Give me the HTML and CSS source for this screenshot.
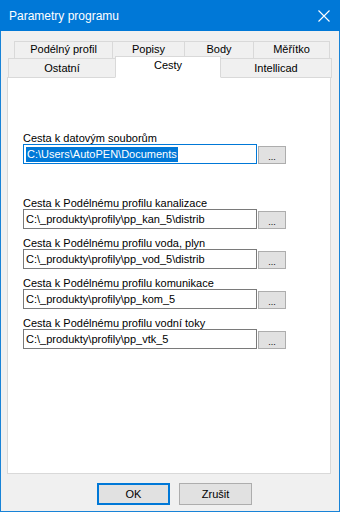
FILE: index.html
```html
<!DOCTYPE html>
<html lang="cs">
  <head>
    <meta charset="UTF-8" />
    <title>Parametry programu</title>
    <link rel="stylesheet" href="styles.css">
  </head>
  <body>
    <div class="window">
      <div class="titlebar">
        <span class="title">Parametry programu</span>
        <svg class="close" width="12" height="12" viewBox="0 0 12 12">
          <path d="M0.5 0.5 L11.5 11.5 M11.5 0.5 L0.5 11.5" stroke="#fff" stroke-width="1.1" fill="none" />
        </svg>
      </div>

      <div class="tabs">
        <div class="tab-row upper">
          <div class="tab w-profil">Podélný profil</div>
          <div class="tab w-popisy">Popisy</div>
          <div class="tab w-body">Body</div>
          <div class="tab w-meritko">Měřítko</div>
        </div>
        <div class="tab-row lower">
          <div class="tab w-ostatni">Ostatní</div>
          <div class="tab w-cesty active">Cesty</div>
          <div class="tab w-intellicad">Intellicad</div>
        </div>
      </div>

      <div class="panel">
        <div class="field first">
          <label>Cesta k datovým souborům</label>
          <div class="row">
            <div class="input focused"><span class="sel">C:\Users\AutoPEN\Documents</span></div>
            <button class="browse">...</button>
          </div>
        </div>

        <div class="paths">
          <div class="field">
            <label>Cesta k Podélnému profilu kanalizace</label>
            <div class="row">
              <div class="input">C:\_produkty\profily\pp_kan_5\distrib</div>
              <button class="browse">...</button>
            </div>
          </div>
          <div class="field">
            <label>Cesta k Podélnému profilu voda, plyn</label>
            <div class="row">
              <div class="input">C:\_produkty\profily\pp_vod_5\distrib</div>
              <button class="browse">...</button>
            </div>
          </div>
          <div class="field">
            <label>Cesta k Podélnému profilu komunikace</label>
            <div class="row">
              <div class="input">C:\_produkty\profily\pp_kom_5</div>
              <button class="browse">...</button>
            </div>
          </div>
          <div class="field">
            <label>Cesta k Podélnému profilu vodní toky</label>
            <div class="row">
              <div class="input">C:\_produkty\profily\pp_vtk_5</div>
              <button class="browse">...</button>
            </div>
          </div>
        </div>
      </div>

      <div class="buttons">
        <button class="btn default">OK</button>
        <button class="btn">Zrušit</button>
      </div>
    </div>
  </body>
</html>
```

FILE: styles.css
```css
body {
  margin: 0;
  padding: 0;
  background: #f0f0f0;
  font-family: "Liberation Sans", Arial, sans-serif;
  font-size: 11px;
  color: #000;
}

.window {
  width: 340px;
  height: 512px;
  box-sizing: border-box;
  border: 1px solid #1883d7;
  border-top: none;
  background: #f0f0f0;
  display: flex;
  flex-direction: column;
}

.titlebar {
  height: 31px;
  margin: 0 -1px;
  background: #0078d7;
  color: white;
  display: flex;
  align-items: center;
  justify-content: space-between;
  padding: 0 10px 0 9px;
  flex-shrink: 0;
}

.title {
  font-size: 12px;
}

.close {
  display: block;
  margin-top: 1px;
}

/* karty */
.tabs {
  margin-top: 10px;
  display: flex;
  flex-direction: column;
}

.tab-row {
  display: flex;
}

.tab {
  box-sizing: border-box;
  border: 1px solid #d9d9d9;
  background: #f0f0f0;
  text-align: center;
  margin-left: -1px;
}

.upper {
  padding-left: 13px;
  height: 17px;
}

.upper .tab {
  height: 17px;
  line-height: 15px;
  border-bottom: none;
}

.lower {
  padding-left: 7px;
  height: 19px;
  position: relative;
  z-index: 2;
}

.lower .tab {
  height: 20px;
  line-height: 18px;
}

.lower .tab:first-child,
.upper .tab:first-child {
  margin-left: 0;
}

.lower .tab.active {
  background: white;
  height: 22px;
  margin-top: -2px;
  line-height: 17px;
  border-bottom-color: white;
  position: relative;
  z-index: 3;
}

.w-profil { width: 99px; }
.w-popisy { width: 73px; }
.w-body { width: 70px; }
.w-meritko { width: 77px; }
.w-ostatni { width: 108px; }
.w-cesty { width: 106px; }
.w-intellicad { width: 112px; }

.panel {
  margin-left: 6px;
  width: 324px;
  height: 397px;
  box-sizing: border-box;
  border: 1px solid #d9d9d9;
  background: white;
  padding: 54px 0 0 15px;
  flex-shrink: 0;
}

.field label {
  display: block;
  height: 12px;
  line-height: 12px;
  white-space: nowrap;
}

.row {
  display: flex;
  align-items: flex-start;
  gap: 1px;
}

.input {
  box-sizing: border-box;
  width: 234px;
  height: 20px;
  border: 1px solid #7a7a7a;
  padding: 0 2px;
  line-height: 18px;
  white-space: nowrap;
  overflow: hidden;
}

.input.focused {
  border-color: #0078d7;
}

.sel {
  background: #0078d7;
  color: white;
  padding: 1px 1px 2px;
}

.browse {
  box-sizing: border-box;
  width: 28px;
  height: 18px;
  margin-top: 2px;
  border: 1px solid #adadad;
  background: #e1e1e1;
  font-family: "Liberation Sans", Arial, sans-serif;
  font-size: 9px;
  padding: 4px 0 0;
  line-height: 10px;
  color: #000;
}

.paths {
  margin-top: 33px;
  display: flex;
  flex-direction: column;
  gap: 8px;
}

/* tlačítka */
.buttons {
  display: flex;
  gap: 9px;
  padding: 9px 0 0 96px;
}

.btn {
  box-sizing: border-box;
  width: 73px;
  height: 22px;
  border: 1px solid #adadad;
  background: #e1e1e1;
  font-family: "Liberation Sans", Arial, sans-serif;
  font-size: 11px;
  color: #000;
  padding: 0;
}

.btn.default {
  border: 2px solid #0078d7;
}
```
